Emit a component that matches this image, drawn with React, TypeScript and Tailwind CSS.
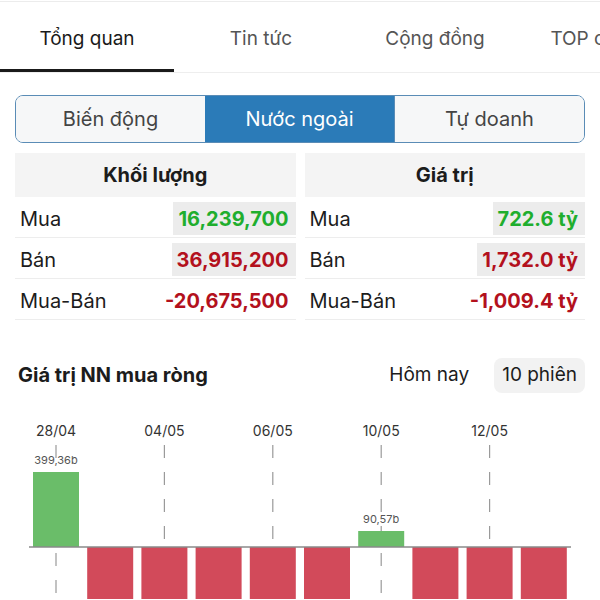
import React from "react";

const tabs = ["Tổng quan", "Tin tức", "Cộng đồng", "TOP cổ đông"];
const segments = ["Biến động", "Nước ngoài", "Tự doanh"];

interface Row {
  label: string;
  value: string;
  tone: "up" | "down";
  boxed: boolean;
}

const volumeRows: Row[] = [
  { label: "Mua", value: "16,239,700", tone: "up", boxed: true },
  { label: "Bán", value: "36,915,200", tone: "down", boxed: true },
  { label: "Mua-Bán", value: "-20,675,500", tone: "down", boxed: false },
];

const valueRows: Row[] = [
  { label: "Mua", value: "722.6 tỷ", tone: "up", boxed: true },
  { label: "Bán", value: "1,732.0 tỷ", tone: "down", boxed: true },
  { label: "Mua-Bán", value: "-1,009.4 tỷ", tone: "down", boxed: false },
];

// net foreign value per session (px height relative to the zero line)
const bars = [75, -70, -70, -70, -70, -70, 16, -70, -70, -70];
const labels = [
  { i: 0, date: "28/04" },
  { i: 2, date: "04/05" },
  { i: 4, date: "06/05" },
  { i: 6, date: "10/05" },
  { i: 8, date: "12/05" },
];
const valueTags: Record<number, string> = { 0: "399,36b", 6: "90,57b" };

const StatTable = ({ title, rows }: { title: string; rows: Row[] }) => (
  <div className="flex-1">
    <div className="h-[44px] bg-[#f4f4f4] flex items-center justify-center text-[20px] font-bold text-[#1c1c1c]">
      {title}
    </div>
    {rows.map((r) => (
      <div
        key={r.label}
        className="h-[41px] flex items-center justify-between border-b border-[#ededed] text-[20px] pt-[3px]"
      >
        <span className="pl-[5px] text-[#1c1c1c]">{r.label}</span>
        <span
          className={`h-[33px] flex items-center pl-[5px] pr-[7px] font-bold ${
            r.boxed ? "bg-[#ececec]" : ""
          } ${r.tone === "up" ? "text-[#1fae2e]" : "text-[#b3111d]"}`}
        >
          {r.value}
        </span>
      </div>
    ))}
  </div>
);

const NetChart = () => {
  const base = 138;
  const x0 = 33;
  const pitch = 54.2;
  const w = 46;
  return (
    <svg width="600" height="190" viewBox="0 0 600 190" className="block">
      {labels.map(({ i, date }) => {
        const cx = x0 + i * pitch + w / 2;
        return (
          <g key={date}>
            <line
              x1={cx}
              y1={36}
              x2={cx}
              y2={190}
              stroke="#9a9a9a"
              strokeWidth="1.2"
              strokeDasharray="13 14"
            />
            <text x={cx} y={27} textAnchor="middle" fontSize="14" fill="#333">
              {date}
            </text>
          </g>
        );
      })}
      {bars.map((v, i) => {
        const x = x0 + i * pitch;
        return v > 0 ? (
          <rect key={i} x={x} y={base - v} width={w} height={v} fill="#6abd69" />
        ) : (
          <rect key={i} x={x} y={base} width={w} height={-v} fill="#d24a5a" />
        );
      })}
      {Object.entries(valueTags).map(([k, t]) => {
        const i = Number(k);
        const cx = x0 + i * pitch + w / 2;
        return (
          <text key={t} x={cx} y={base - bars[i] - 8} textAnchor="middle" fontSize="11" fill="#555">
            {t}
          </text>
        );
      })}
      <line x1="29" y1={base} x2="571" y2={base} stroke="#8a8a8a" strokeWidth="1.5" />
    </svg>
  );
};

export default function App() {
  return (
    <div
      className="w-[600px] h-[600px] overflow-hidden bg-white"
      style={{ fontFamily: "Inter, 'Liberation Sans', sans-serif" }}
    >
      <div className="h-[2px] border-b border-[#ececec]" />
      {/* top tabs */}
      <div className="flex h-[71px] border-b border-[#eeeeee] overflow-hidden">
        {tabs.map((t, i) => (
          <div
            key={t}
            className={`w-[174px] shrink-0 flex items-center justify-center text-[19px] whitespace-nowrap ${
              i === 0 ? "text-[#1a1a1a] border-b-[3px] border-[#1a1a1a] pt-[7px]" : "text-[#555] pt-[4px]"
            }`}
          >
            {t}
          </div>
        ))}
      </div>

      {/* segmented control */}
      <div className="mx-[15px] mt-[22px] h-[48px] flex rounded-[8px] border border-[#5a8cb6] overflow-hidden">
        {segments.map((s, i) => (
          <div
            key={s}
            className={`flex-1 flex items-center justify-center text-[20px] ${
              i === 1 ? "bg-[#2b7bb8] text-white" : "bg-[#f6f7f8] text-[#444]"
            } ${i === 2 ? "border-l border-[#5a8cb6]" : ""}`}
          >
            {s}
          </div>
        ))}
      </div>

      {/* stat tables */}
      <div className="mx-[15px] mt-[10px] flex gap-[9px]">
        <StatTable title="Khối lượng" rows={volumeRows} />
        <StatTable title="Giá trị" rows={valueRows} />
      </div>

      {/* chart header */}
      <div className="mt-[37px] pl-[18px] pr-[15px] flex items-center justify-between h-[36px]">
        <span className="text-[20px] font-bold text-[#1c1c1c]">Giá trị NN mua ròng</span>
        <div className="flex items-center gap-[25px] text-[19px] text-[#1c1c1c]">
          <span>Hôm nay</span>
          <span className="h-[35px] px-[8px] flex items-center rounded-[8px] bg-[#f2f2f2]">10 phiên</span>
        </div>
      </div>

      <div className="mt-[16px]">
        <NetChart />
      </div>
    </div>
  );
}
